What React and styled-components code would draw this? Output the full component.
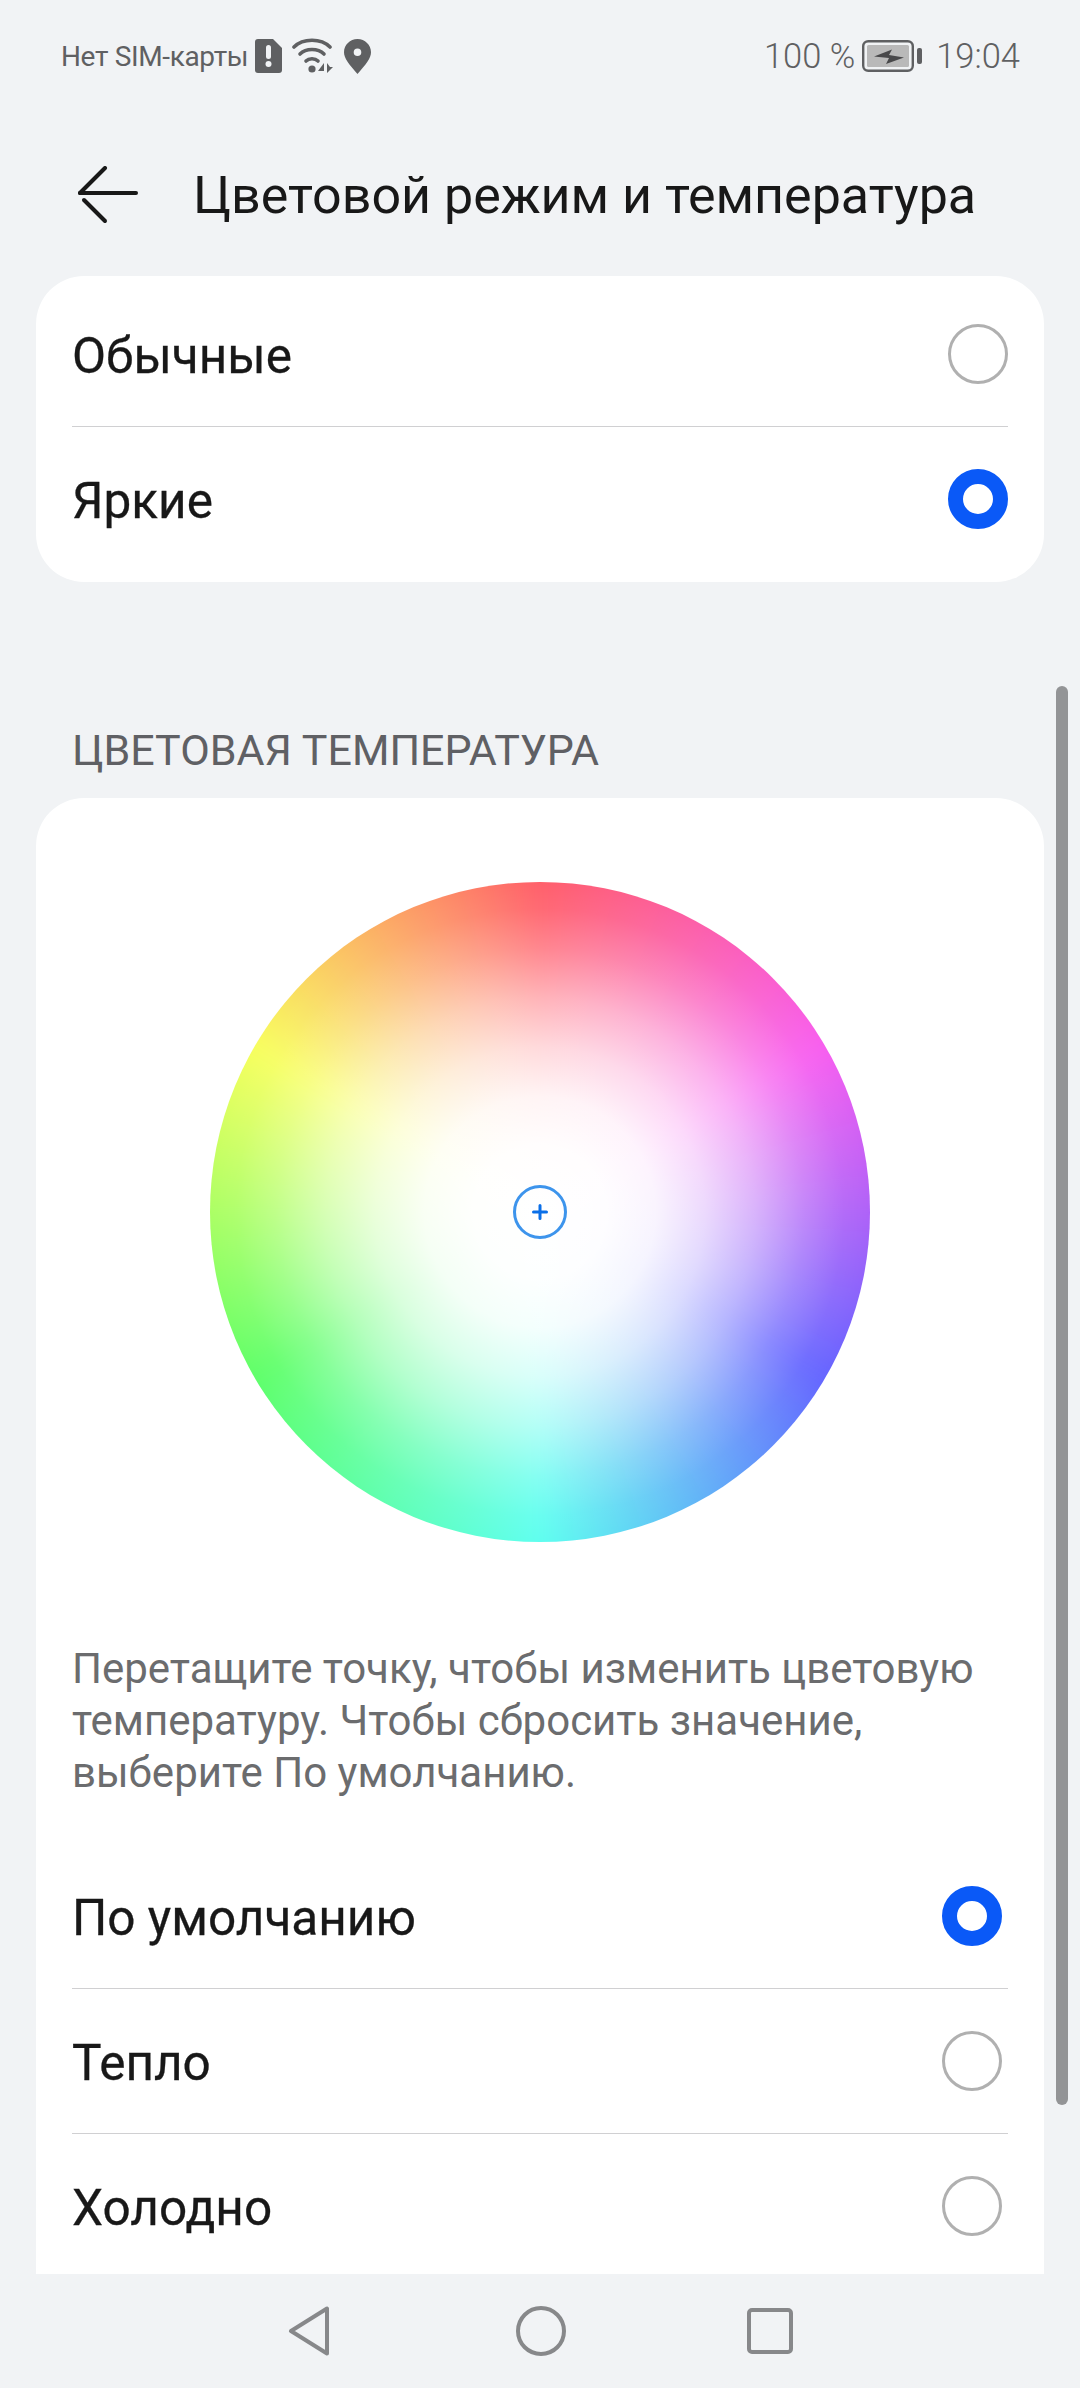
import React from 'react';
import styled, { createGlobalStyle } from 'styled-components';

const GlobalStyle = createGlobalStyle`
  html, body {
    margin: 0;
    padding: 0;
    background: #f1f3f5;
  }
  * {
    box-sizing: border-box;
  }
`;

const Page = styled.div`
  position: relative;
  width: 1080px;
  height: 2388px;
  display: flex;
  flex-direction: column;
  overflow: hidden;
  background: #f1f3f5;
  color: #181818;
  font-family: Roboto, "Noto Sans", sans-serif;
`;

const StatusBar = styled.div`
  height: 114px;
  flex: none;
  display: flex;
  justify-content: space-between;
  align-items: flex-start;
  padding: 36px 60px 0 61px;
  color: #5f6062;
`;

const StatusGroup = styled.div`
  display: flex;
  align-items: center;
  height: 40px;
`;

const CarrierText = styled.span`
  font-size: 28px;
  letter-spacing: -0.35px;
  margin-right: 7px;
`;

const StatusText = styled.span`
  font-size: 34.5px;
  font-weight: 300;
`;

const Icon = styled.svg`
  flex: none;
  margin: 0 ${(p) => p.$right || 0}px 0 ${(p) => p.$left || 0}px;
`;

const Header = styled.div`
  height: 162px;
  flex: none;
  display: flex;
  align-items: center;
  padding-left: 78px;
`;

const Title = styled.h1`
  margin: 0 0 0 55px;
  font-size: 52px;
  font-weight: 400;
`;

const Content = styled.div`
  flex: 1;
  min-height: 0;
  overflow: hidden;
  padding: 0 36px;
`;

const Card = styled.div`
  background: #fff;
  border-radius: 48px;
  padding: ${(p) => p.$padding};
`;

const SectionLabel = styled.div`
  height: 216px;
  display: flex;
  align-items: flex-end;
  padding: 0 0 23px 36px;
  font-size: 43px;
  color: #5f6064;
`;

const Row = styled.div`
  height: 144px;
  display: flex;
  align-items: center;
  justify-content: space-between;
  border-bottom: ${(p) => (p.$divider ? '1px solid #d0d0d2' : 'none')};
  box-sizing: content-box;
`;

const RowText = styled.span`
  font-size: 49.5px;
  -webkit-text-stroke: 0.3px #181818;
  padding-top: 3px;
`;

const Radio = styled.span`
  width: 60px;
  height: 60px;
  flex: none;
  border-radius: 50%;
  margin-right: ${(p) => p.$inset || 0}px;
  background: #fff;
  border: ${(p) => (p.$checked ? '15px solid #0a59f7' : '3px solid #b0b0b0')};
`;

const WheelWrap = styled.div`
  display: flex;
  justify-content: center;
`;

const Wheel = styled.div`
  position: relative;
  width: 660px;
  height: 660px;
  border-radius: 50%;
  overflow: hidden;

  &::before {
    content: '';
    position: absolute;
    inset: -30px;
    filter: blur(10px);
    background: conic-gradient(
      #ff5f6a 0deg,
      #f85ff0 60deg,
      #6565ff 120deg,
      #60fff0 180deg,
      #5fff6a 240deg,
      #f8ff5f 300deg,
      #ff5f6a 360deg);
  }

  &::after {
    content: '';
    position: absolute;
    inset: 0;
    background: radial-gradient(circle closest-side,
      #fff 0%,
      rgba(255, 255, 255, 0.99) 20%,
      rgba(255, 255, 255, 0.93) 35%,
      rgba(255, 255, 255, 0.76) 50%,
      rgba(255, 255, 255, 0.52) 65%,
      rgba(255, 255, 255, 0.24) 80%,
      rgba(255, 255, 255, 0.06) 92%,
      rgba(255, 255, 255, 0) 100%);
  }
`;

const Handle = styled.div`
  position: absolute;
  z-index: 1;
  left: 50%;
  top: 50%;
  width: 54px;
  height: 54px;
  margin: -27px 0 0 -27px;
  border-radius: 50%;
  border: 3px solid #3d94ec;
  display: flex;
  align-items: center;
  justify-content: center;
`;

const Description = styled.p`
  margin: 101px 0 45px;
  font-size: 42px;
  line-height: 52px;
  color: #6b6c6e;
`;

const ScrollBar = styled.div`
  position: absolute;
  left: 1056px;
  top: 686px;
  width: 12px;
  height: 1419px;
  border-radius: 6px;
  background: #939496;
`;

const NavBar = styled.div`
  height: 114px;
  flex: none;
  display: flex;
  align-items: center;
  justify-content: center;
  gap: 181px;
`;

const SimIcon = () => (
  <Icon width="27" height="34" viewBox="0 0 27 34" $right={10}>
    <path d="M3 0h15l9 9v22a3 3 0 0 1-3 3H3a3 3 0 0 1-3-3V3a3 3 0 0 1 3-3z" fill="#5f6062" />
    <rect x="11" y="6" width="5" height="14" rx="2.5" fill="#f1f3f5" />
    <circle cx="13.5" cy="25" r="3" fill="#f1f3f5" />
  </Icon>
);

const WifiIcon = () => (
  <Icon width="42" height="36" viewBox="0 0 42 36" $right={10}>
    <g fill="none" stroke="#5f6062" strokeWidth="3.6" strokeLinecap="round">
      <path d="M2 9C11 0 29 0 38 9" />
      <path d="M8 16C14 10 26 10 32 16" />
      <path d="M14 23C17 20 23 20 26 23" />
    </g>
    <circle cx="20" cy="31" r="3.6" fill="#5f6062" />
    <path d="M32 25v8h-6zM35 25v10l6-6h-3z" fill="#5f6062" />
  </Icon>
);

const PinIcon = () => (
  <Icon width="27" height="35" viewBox="0 0 27 35">
    <path
      fillRule="evenodd"
      d="M13.5 0C21 0 27 6 27 13.2c0 6-5 12-13.5 21.8C5 25.2 0 19.200 0 13.2 0 6 6 0 13.500 0zm0 9.500a3.800 3.800 0 1 0 0 7.600 3.800 3.800 0 0 0 0-7.600z"
      fill="#5f6062"
    />
  </Icon>
);

const BatteryIcon = () => (
  <Icon width="60" height="32" viewBox="0 0 60 32" $left={7} $right={14}>
    <rect x="1.200" y="1.200" width="49.600" height="29.600" rx="5" fill="none" stroke="#5f6062" strokeWidth="2.400" />
    <rect x="5" y="5" width="42" height="22" rx="1.500" fill="#b9b9b9" />
    <rect x="55" y="8" width="5" height="16" rx="2" fill="#5f6062" />
    <path d="M12 16.500L30 9.500 27 15 42 17.500 24 24 27 18z" fill="#48484a" />
  </Icon>
);

const BackIcon = () => (
  <Icon width="60" height="58" viewBox="0 0 60 58" fill="none" stroke="#181818" strokeWidth="4" strokeLinecap="round">
    <path d="M2 27L27 2" />
    <path d="M2 27H58" />
    <path d="M6 34L27 55" />
  </Icon>
);

const PlusIcon = () => (
  <Icon width="16" height="16" viewBox="0 0 16 16" stroke="#0a6fe8" strokeWidth="3" strokeLinecap="round">
    <path d="M8 1.500V14.500M1.500 8H14.500" />
  </Icon>
);

const NavBack = () => (
  <Icon width="42" height="50" viewBox="0 0 42 50" fill="none" stroke="#87888a" strokeWidth="4" strokeLinejoin="round" $right={5}>
    <path d="M39 2.500V47.500L3 25z" />
  </Icon>
);

const NavHome = () => (
  <Icon width="50" height="50" viewBox="0 0 50 50" fill="none" stroke="#87888a" strokeWidth="4">
    <circle cx="25" cy="25" r="23" />
  </Icon>
);

const NavRecent = () => (
  <Icon width="46" height="46" viewBox="0 0 46 46" fill="none" stroke="#87888a" strokeWidth="4">
    <rect x="2" y="2" width="42" height="42" rx="3" />
  </Icon>
);

const App = () => (
  <Page>
    <GlobalStyle />
    <StatusBar>
      <StatusGroup>
        <CarrierText>Нет SIM-карты</CarrierText>
        <SimIcon />
        <WifiIcon />
        <PinIcon />
      </StatusGroup>
      <StatusGroup>
        <StatusText>100 %</StatusText>
        <BatteryIcon />
        <StatusText>19:04</StatusText>
      </StatusGroup>
    </StatusBar>
    <Header>
      <BackIcon />
      <Title>Цветовой режим и температура</Title>
    </Header>
    <Content>
      <Card $padding="6px 36px 11px">
        <Row $divider>
          <RowText>Обычные</RowText>
          <Radio />
        </Row>
        <Row>
          <RowText>Яркие</RowText>
          <Radio $checked />
        </Row>
      </Card>
      <SectionLabel>ЦВЕТОВАЯ ТЕМПЕРАТУРА</SectionLabel>
      <Card $padding="84px 36px 60px">
        <WheelWrap>
          <Wheel>
            <Handle>
              <PlusIcon />
            </Handle>
          </Wheel>
        </WheelWrap>
        <Description>
          Перетащите точку, чтобы изменить цветовую температуру. Чтобы сбросить значение, выберите По умолчанию.
        </Description>
        <Row $divider>
          <RowText>По умолчанию</RowText>
          <Radio $checked $inset={6} />
        </Row>
        <Row $divider>
          <RowText>Тепло</RowText>
          <Radio $inset={6} />
        </Row>
        <Row>
          <RowText>Холодно</RowText>
          <Radio $inset={6} />
        </Row>
      </Card>
    </Content>
    <NavBar>
      <NavBack />
      <NavHome />
      <NavRecent />
    </NavBar>
    <ScrollBar />
  </Page>
);

export default App;
